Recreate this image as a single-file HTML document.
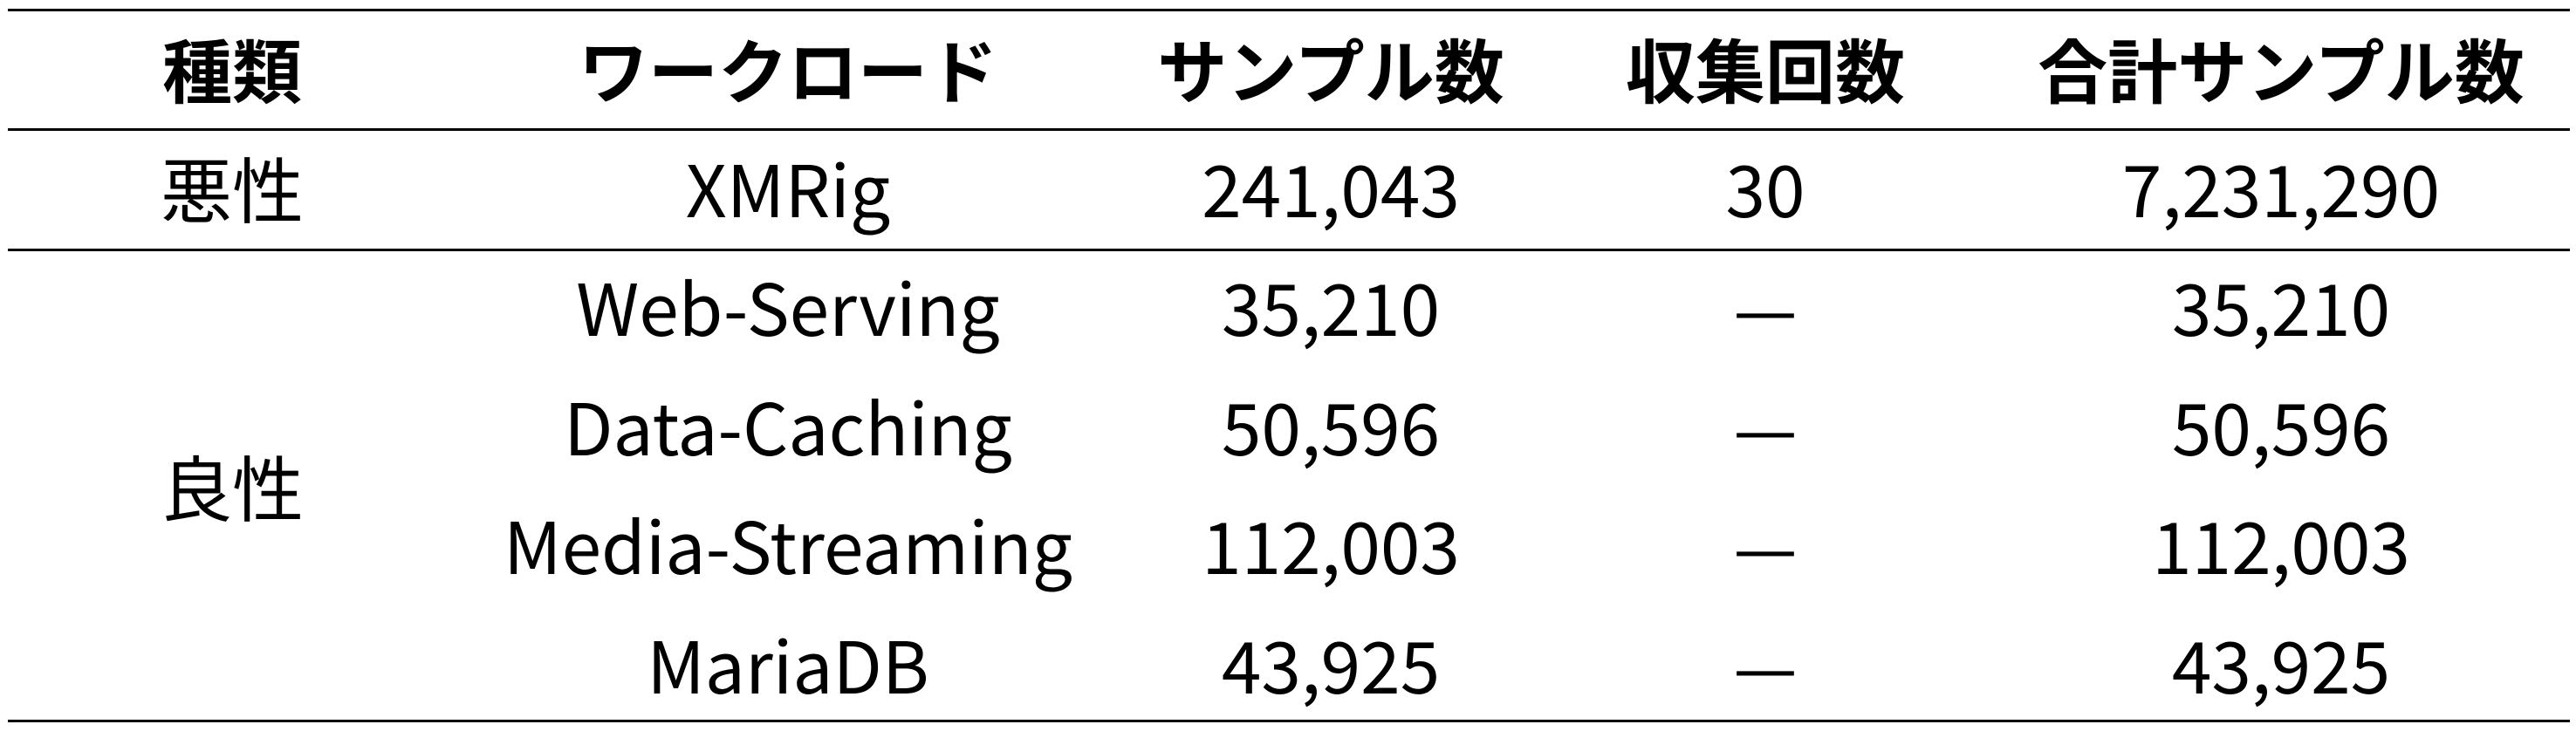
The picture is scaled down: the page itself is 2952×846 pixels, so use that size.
<!DOCTYPE html>
<html><head><meta charset="utf-8"><style>
html,body{margin:0;padding:0;background:#fff;}
body{width:2952px;height:846px;position:relative;overflow:hidden;font-family:"Noto Sans CJK JP",sans-serif;color:#000;}
.l{position:absolute;left:9px;width:2936px;height:3px;background:#000;}
.t{position:absolute;transform:translate(-50%,-50%);font-size:82px;font-weight:400;white-space:nowrap;line-height:1;}
.h{font-weight:bold;font-size:80px;}
</style></head><body>
<div class="l" style="top:10px"></div>
<div class="l" style="top:147px"></div>
<div class="l" style="top:285px"></div>
<div class="l" style="top:825px"></div>

<div class="t h" style="left:266px;top:78px">種類</div>
<div class="t h" style="left:903px;top:78px">ワークロード</div>
<div class="t h" style="left:1525px;top:78px">サンプル数</div>
<div class="t h" style="left:2023px;top:78px">収集回数</div>
<div class="t h" style="left:2614px;top:78px">合計サンプル数</div>

<div class="t" style="left:266px;top:214px">悪性</div>
<div class="t" style="left:903px;top:214px">XMRig</div>
<div class="t" style="left:1525px;top:214px">241,043</div>
<div class="t" style="left:2023px;top:214px">30</div>
<div class="t" style="left:2614px;top:214px">7,231,290</div>

<div class="t" style="left:266px;top:556px">良性</div>

<div class="t" style="left:903px;top:350px">Web-Serving</div>
<div class="t" style="left:1525px;top:350px">35,210</div>
<div class="t" style="left:2023px;top:350px">—</div>
<div class="t" style="left:2614px;top:350px">35,210</div>

<div class="t" style="left:903px;top:487px">Data-Caching</div>
<div class="t" style="left:1525px;top:487px">50,596</div>
<div class="t" style="left:2023px;top:487px">—</div>
<div class="t" style="left:2614px;top:487px">50,596</div>

<div class="t" style="left:903px;top:623px">Media-Streaming</div>
<div class="t" style="left:1525px;top:623px">112,003</div>
<div class="t" style="left:2023px;top:623px">—</div>
<div class="t" style="left:2614px;top:623px">112,003</div>

<div class="t" style="left:903px;top:760px">MariaDB</div>
<div class="t" style="left:1525px;top:760px">43,925</div>
<div class="t" style="left:2023px;top:760px">—</div>
<div class="t" style="left:2614px;top:760px">43,925</div>
</body></html>
